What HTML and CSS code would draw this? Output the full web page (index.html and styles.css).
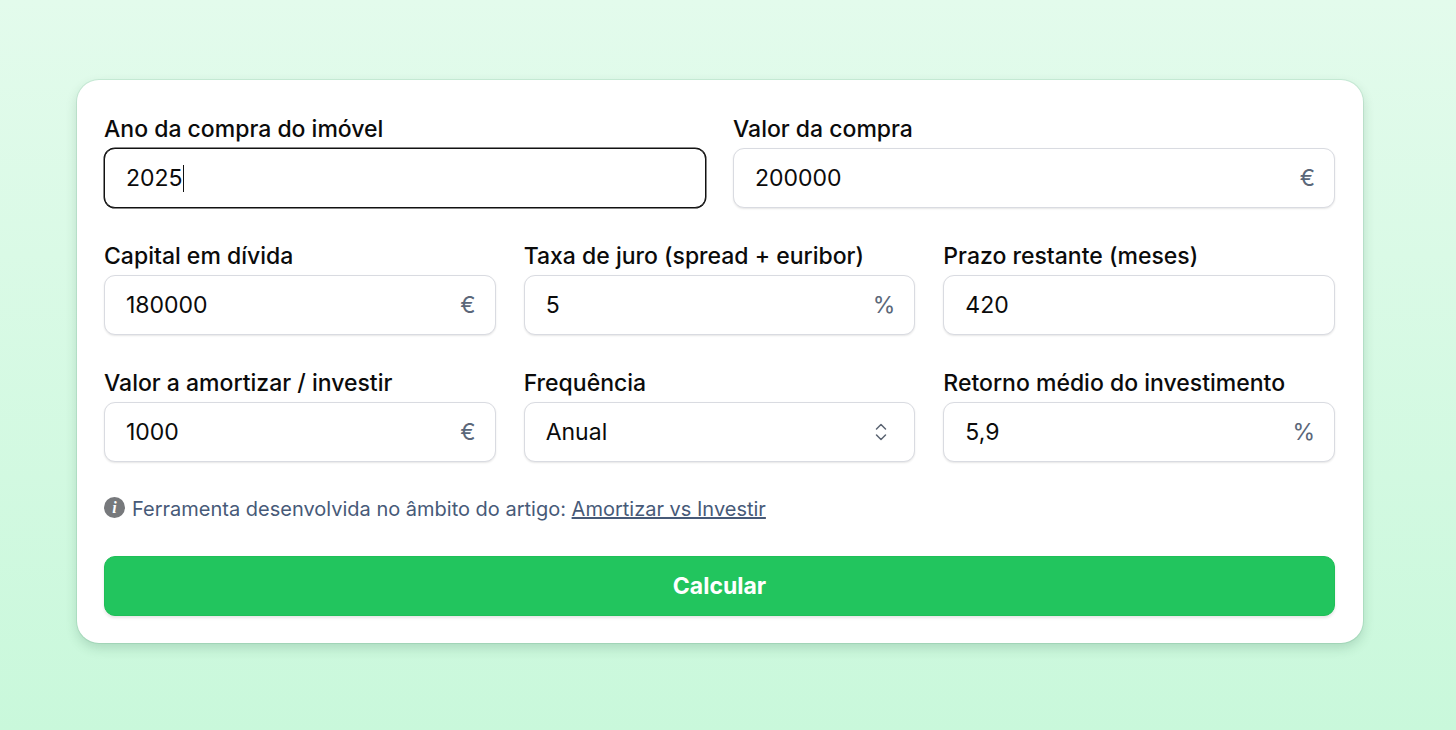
FILE: index.html
```html
<!DOCTYPE html>
<html lang="pt">
<head>
    <meta charset="UTF-8">
    <meta name="viewport" content="width=device-width, initial-scale=1.0">
    <title>Amortizar vs Investir</title>
    <link rel="stylesheet" href="styles.css">
</head>
<body>
    <div class="card">
        <div class="row row-2">
            <div class="field">
                <label>Ano da compra do imóvel</label>
                <div class="input focused"><span class="value">2025</span><span class="caret"></span></div>
            </div>
            <div class="field">
                <label>Valor da compra</label>
                <div class="input"><span class="value">200000</span><span class="unit">€</span></div>
            </div>
        </div>
        <div class="row row-3">
            <div class="field">
                <label>Capital em dívida</label>
                <div class="input"><span class="value">180000</span><span class="unit">€</span></div>
            </div>
            <div class="field">
                <label>Taxa de juro (spread + euribor)</label>
                <div class="input"><span class="value">5</span><span class="unit">%</span></div>
            </div>
            <div class="field">
                <label>Prazo restante (meses)</label>
                <div class="input"><span class="value">420</span></div>
            </div>
        </div>
        <div class="row row-3">
            <div class="field">
                <label>Valor a amortizar / investir</label>
                <div class="input"><span class="value">1000</span><span class="unit">€</span></div>
            </div>
            <div class="field">
                <label>Frequência</label>
                <div class="input">
                    <span class="value">Anual</span>
                    <svg class="chevrons" width="14" height="20" viewBox="0 0 14 20" fill="none" stroke="#5b6472" stroke-width="1.5" stroke-linecap="round" stroke-linejoin="round">
                        <path d="M2.5 7 7 2.5 11.5 7"/>
                        <path d="M2.5 13 7 17.5 11.5 13"/>
                    </svg>
                </div>
            </div>
            <div class="field">
                <label>Retorno médio do investimento</label>
                <div class="input"><span class="value">5,9</span><span class="unit">%</span></div>
            </div>
        </div>
        <p class="note"><span class="info-icon">i</span>Ferramenta desenvolvida no âmbito do artigo: <a href="#">Amortizar vs Investir</a></p>
        <button class="submit">Calcular</button>
    </div>
</body>
</html>
```

FILE: styles.css
```css
* {
    box-sizing: border-box;
    margin: 0;
}

body {
    height: 730px;
    overflow: hidden;
    padding: 80px 93px 0 77px;
    font-family: Inter, "Liberation Sans", sans-serif;
    background: linear-gradient(180deg, #e3fbec 0%, #c9f8db 100%);
}

.card {
    height: 563px;
    padding: 36px 28px 0 27px;
    background-color: #fff;
    border-radius: 22px;
    box-shadow: 0 0 0 1px rgba(20, 120, 70, 0.1), 0 5px 12px rgba(20, 80, 50, 0.18);
}

.row {
    display: grid;
    margin-bottom: 35px;
}

.row-2 {
    gap: 27px;
    grid-template-columns: repeat(2, 1fr);
}

.row-3 {
    gap: 28px;
    grid-template-columns: repeat(3, 1fr);
}

.field label {
    display: block;
    height: 32px;
    font-size: 23px;
    line-height: 26px;
    font-weight: 500;
    color: #0b0b0b;
}

.input {
    display: flex;
    align-items: center;
    height: 60px;
    padding: 0 19px 0 21px;
    font-size: 23px;
    color: #0b0b0b;
    background-color: #fff;
    border: 1px solid #d9dbe1;
    border-radius: 11px;
    box-shadow: 0 1px 2px rgba(0, 0, 0, 0.1);
}

.input.focused {
    border-color: #111;
    box-shadow: 0 0 0 0.5px #111;
}

.value {
    flex: 1 1 auto;
}

.focused .value {
    flex: 0 0 auto;
}

.caret {
    width: 1px;
    height: 27px;
    background-color: #111;
}

.unit {
    color: #5b6779;
}

.chevrons {
    flex: none;
    margin-right: 7px;
}

.note {
    height: 24px;
    margin-bottom: 35px;
    font-size: 20px;
    line-height: 24px;
    color: #475a78;
}

.info-icon {
    display: inline-block;
    width: 21px;
    height: 21px;
    margin-right: 7px;
    vertical-align: top;
    border-radius: 50%;
    background-color: #77797c;
    color: #fff;
    font-family: "Liberation Serif", serif;
    font-style: italic;
    font-weight: bold;
    font-size: 16px;
    line-height: 21px;
    text-align: center;
}

.note a {
    color: #475a78;
}

.submit {
    display: block;
    width: 100%;
    height: 60px;
    font-family: inherit;
    font-size: 23px;
    font-weight: 700;
    color: #fff;
    background-color: #22c55e;
    border: 1px solid #1fbf58;
    border-radius: 11px;
    box-shadow: 0 2px 3px rgba(0, 0, 0, 0.1);
}
```
